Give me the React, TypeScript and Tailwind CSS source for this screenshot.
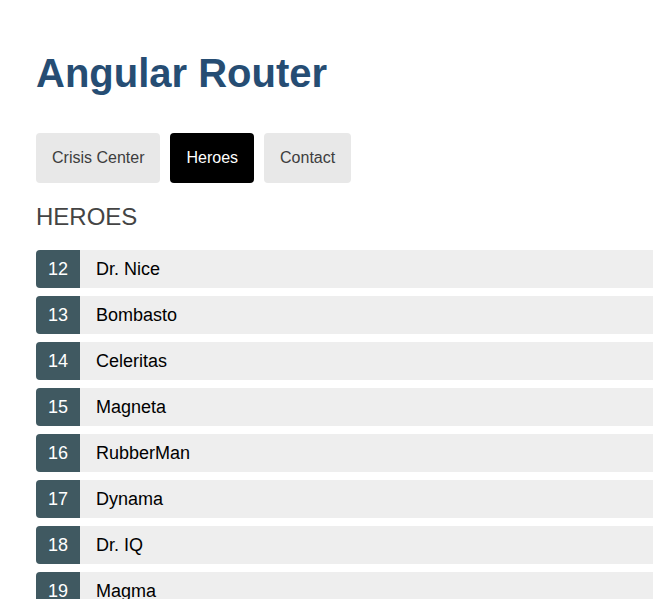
import React from "react";

const heroes = [
  { id: 12, name: "Dr. Nice" },
  { id: 13, name: "Bombasto" },
  { id: 14, name: "Celeritas" },
  { id: 15, name: "Magneta" },
  { id: 16, name: "RubberMan" },
  { id: 17, name: "Dynama" },
  { id: 18, name: "Dr. IQ" },
  { id: 19, name: "Magma" },
  { id: 20, name: "Tornado" },
];

const links = ["Crisis Center", "Heroes", "Contact"];

export default function App() {
  return (
    <div className="min-h-screen w-full overflow-hidden bg-white pl-[36px] font-['Liberation_Sans',Arial,sans-serif]">
      <h1 className="pt-[50px] text-[40px] leading-[46px] font-bold text-[#264D73]">Angular Router</h1>

      {/* Nav */}
      <nav className="mt-[37px] flex gap-[10px]">
        {links.map((l) => (
          <a
            key={l}
            className={
              l === "Heroes"
                ? "rounded-[4px] bg-black px-4 py-4 text-[16px] leading-[18px] text-white"
                : "rounded-[4px] bg-[#e8e8e8] px-4 py-4 text-[16px] leading-[18px] text-[#3d3d3d]"
            }
          >
            {l}
          </a>
        ))}
      </nav>

      <h2 className="mt-[20px] text-[24px] leading-[28px] font-normal text-[#444]">HEROES</h2>

      {/* Heroes list, runs past the right edge */}
      <ul className="mt-[19px] -mr-[12px] flex flex-col gap-[8px]">
        {heroes.map((h) => (
          <li key={h.id} className="flex h-[38px] items-stretch rounded-[4px] bg-[#eeeeee] text-[18px] leading-[38px]">
            <span className="w-[44px] rounded-l-[4px] bg-[#405961] text-center text-white">{h.id}</span>
            <span className="pl-[16px] text-black">{h.name}</span>
          </li>
        ))}
      </ul>
    </div>
  );
}
